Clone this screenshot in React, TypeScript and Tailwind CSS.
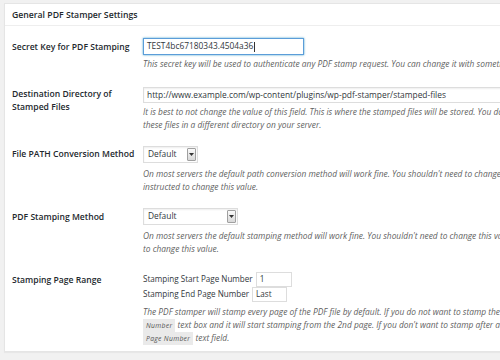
import React from "react";

const font = { fontFamily: '"Open Sans", "Liberation Sans", sans-serif' };

function Select({ width }: { width: string }) {
  return (
    <div className={`flex items-center h-[17px] ${width} bg-white border border-[#dddddd] shadow-[inset_0_1px_2px_rgba(0,0,0,0.07)]`}>
      <span className="flex-1 pl-[4px] text-[8.4px] text-[#32373c] leading-none">Default</span>
      <span className="mr-[1px] w-[9px] h-[13px] border border-[#a0a0a0] rounded-[1px] bg-gradient-to-b from-[#fafafa] to-[#d8d8d8] flex items-center justify-center">
        <svg width="5" height="3" viewBox="0 0 5 3"><path d="M0 0h5L2.5 3z" fill="#333" /></svg>
      </span>
    </div>
  );
}

function Desc({ lines }: { lines: React.ReactNode[] }) {
  return (
    <div className="text-[8.4px] italic text-[#5f5f5f] leading-[13px]">
      {lines.map((l, i) => (
        <div key={i} className="whitespace-nowrap h-[13px]">{l}</div>
      ))}
    </div>
  );
}

function Code({ children }: { children: React.ReactNode }) {
  return (
    <span className="bg-[#eaeaea] text-[#555] px-[3px] py-[2px] text-[6.8px] leading-[8px] tracking-[0.3px]">
      {children}
    </span>
  );
}

function Row({ label, mt, labelMt, children }: { label: React.ReactNode; mt: string; labelMt: string; children: React.ReactNode }) {
  return (
    <div className={`flex ${mt}`}>
      <div className={`w-[131px] shrink-0 text-[8.6px] font-semibold text-[#23282d] leading-[13px] ${labelMt}`}>{label}</div>
      <div className="flex-1 min-w-0">{children}</div>
    </div>
  );
}

export default function App() {
  return (
    <div className="w-[500px] h-[360px] overflow-hidden bg-[#f1f1f1] pl-[4px] pt-[3px]" style={font}>
      <div className="w-[600px] h-[349px] bg-white border border-[#e5e5e5] shadow-[0_1px_1px_rgba(0,0,0,0.04)]">
        <div className="h-[22px] border-b border-[#eeeeee] pl-[7px] flex items-center pt-[2px]">
          <span className="text-[8.7px] font-semibold text-[#23282d]">General PDF Stamper Settings</span>
        </div>
        <div className="pl-[7px]">
          <Row label="Secret Key for PDF Stamping" mt="mt-[12px]" labelMt="mt-[3px]">
            <div className="w-[161px] h-[17px] border border-[#5b9dd9] shadow-[0_0_2px_rgba(30,140,190,0.8)] flex items-center pl-[3px] text-[8.4px] text-[#32373c]">
              TEST4bc67180343.4504a36<span className="inline-block w-px h-[10px] bg-[#333] ml-[1px]" />
            </div>
            <div className="mt-[2px]">
              <Desc lines={["This secret key will be used to authenticate any PDF stamp request. You can change it with something random if you want."]} />
            </div>
          </Row>
          <Row label={<>Destination Directory of<br />Stamped Files</>} mt="mt-[17px]" labelMt="mt-[1px]">
            <div className="w-[500px] h-[16px] border border-[#dddddd] shadow-[inset_0_1px_2px_rgba(0,0,0,0.07)] flex items-center pl-[3px] text-[8.4px] text-[#32373c]">
              http://www.example.com/wp-content/plugins/wp-pdf-stamper/stamped-files
            </div>
            <div className="mt-[2px]">
              <Desc lines={["It is best to not change the value of this field. This is where the stamped files will be stored. You do not need to change it unless you want to store", "these files in a different directory on your server."]} />
            </div>
          </Row>
          <Row label="File PATH Conversion Method" mt="mt-[15px]" labelMt="mt-[2px]">
            <Select width="w-[55px]" />
            <div className="mt-[4px]">
              <Desc lines={["On most servers the default path conversion method will work fine. You shouldn't need to change this unless you are", "instructed to change this value."]} />
            </div>
          </Row>
          <Row label="PDF Stamping Method" mt="mt-[15px]" labelMt="mt-[3px]">
            <Select width="w-[95px]" />
            <div className="mt-[4px]">
              <Desc lines={["On most servers the default stamping method will work fine. You shouldn't need to change this value unless you are instructed", "to change this value."]} />
            </div>
          </Row>
          <Row label="Stamping Page Range" mt="mt-[16px]" labelMt="mt-[3px]">
            <div className="flex items-center h-[15px] text-[8.1px] text-[#32373c] whitespace-nowrap mt-[1px]">
              Stamping Start Page Number
              <span className="ml-[3px] w-[36px] h-[15px] border border-[#dddddd] flex items-center pl-[3px]">1</span>
            </div>
            <div className="flex items-center h-[15px] text-[8.1px] text-[#32373c] whitespace-nowrap">
              Stamping End Page Number
              <span className="ml-[3px] w-[35px] h-[15px] border border-[#dddddd] flex items-center pl-[3px]">Last</span>
            </div>
            <div className="mt-[3px]">
              <Desc lines={[
                "The PDF stamper will stamp every page of the PDF file by default. If you do not want to stamp the cover page then enter 2 in the Stamping Start Page",
                <><Code>Number</Code> text box and it will start stamping from the 2nd page. If you don't want to stamp after a certain page then enter the page number in the Stamping End</>,
                <><Code>Page Number</Code> text field.</>,
              ]} />
            </div>
          </Row>
        </div>
      </div>
    </div>
  );
}
